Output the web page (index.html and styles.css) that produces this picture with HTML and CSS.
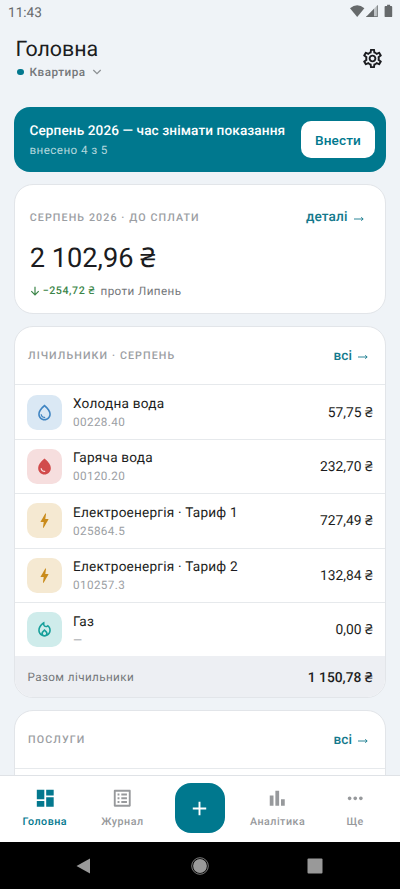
FILE: index.html
```html
<!DOCTYPE html>
<html lang="uk">
<head>
<meta charset="utf-8">
<title>Головна</title>
<link rel="stylesheet" href="styles.css">
</head>
<body>
<div class="screen">
  <div class="status">
    <span class="clock">11:43</span>
    <svg class="status-icons" viewBox="0 0 46 16">
      <path d="M0 4.2Q7.2-1.8 14.4 4.2L7.2 13z"/>
      <path d="M16 13L27.6 1v12z" opacity=".35"/><path d="M16 13L24 4.7V13z"/><path d="M27.7 1v12H16.5v-.7h10.4V2z"/>
      <path d="M35.500 2h1.600V.8h3V2h1.200q.9 0 .9.9v9.300q0 .9-.9.9h-5.800q-.9 0-.9-.9V2.900q0-.9.9-.9z"/>
    </svg>
  </div>
  <header class="header">
    <div>
      <h1>Головна</h1>
      <div class="place"><i class="dot"></i><span>Квартира</span><svg viewBox="0 0 10 6"><path d="M1.300 1l3.700 3.600L8.700 1"/></svg></div>
    </div>
    <svg class="gear" viewBox="0 0 24 24"><path d="M19.43 12.98c.04-.32.07-.64.07-.98 0-.34-.03-.66-.07-.98l2.110-1.650c.19-.15.24-.42.12-.64l-2-3.460c-.09-.16-.26-.25-.44-.25-.06 0-.12.01-.17.03l-2.490 1c-.52-.4-1.080-.73-1.690-.98l-.38-2.650C14.460 2.180 14.250 2 14 2h-4c-.25 0-.46.18-.49.42l-.38 2.650c-.61.25-1.170.59-1.690.98l-2.490-1c-.06-.02-.12-.03-.18-.03-.17 0-.34.09-.43.25l-2 3.460c-.13.22-.07.49.12.64l2.110 1.650c-.04.32-.07.65-.07.98 0 .33.03.66.07.98l-2.110 1.650c-.19.15-.24.42-.12.64l2 3.460c.09.16.26.25.44.25.06 0 .12-.01.17-.03l2.490-1c.52.4 1.080.73 1.690.98l.38 2.650c.03.24.24.42.49.42h4c.25 0 .46-.18.49-.42l.38-2.650c.61-.25 1.170-.59 1.690-.98l2.490 1c.06.02.12.03.18.03.17 0 .34-.09.43-.25l2-3.460c.12-.22.07-.49-.12-.64l-2.110-1.650zm-1.980-1.710c.04.31.05.52.05.73 0 .21-.02.43-.05.73l-.14 1.130.89.7 1.080.84-.7 1.210-1.270-.51-1.040-.42-.9.68c-.43.32-.84.56-1.250.73l-1.060.43-.16 1.130-.2 1.350h-1.400l-.19-1.350-.16-1.130-1.060-.43c-.43-.18-.83-.41-1.230-.71l-.91-.7-1.060.43-1.270.51-.7-1.210 1.080-.84.89-.7-.14-1.130c-.03-.31-.05-.54-.05-.74s.02-.43.05-.73l.14-1.130-.89-.7-1.080-.84.7-1.210 1.270.51 1.040.42.9-.68c.43-.32.84-.56 1.250-.73l1.060-.43.16-1.130.2-1.350h1.390l.19 1.350.16 1.130 1.060.43c.43.18.83.41 1.230.71l.91.7 1.060-.43 1.270-.51.7 1.210-1.070.85-.89.7.14 1.130zM12 8c-2.210 0-4 1.790-4 4s1.790 4 4 4 4-1.790 4-4-1.790-4-4-4zm0 6c-1.100 0-2-.9-2-2s.9-2 2-2 2 .9 2 2-.9 2-2 2z"/></svg>
  </header>

  <main class="content">
    <section class="banner">
      <div>
        <div class="banner-title">Серпень 2026 — час знімати показання</div>
        <div class="banner-sub">внесено 4 з 5</div>
      </div>
      <button class="enter">Внести</button>
    </section>

    <section class="card summary">
      <div class="card-head"><span class="label">СЕРПЕНЬ 2026 · ДО СПЛАТИ</span><a class="link">деталі <svg class="arrow" viewBox="0 0 10 6"><path d="M0 3h9M7.200 1.300L9.200 3 7.200 4.700"/></svg></a></div>
      <div class="amount">2 102,96 ₴</div>
      <div class="compare"><svg viewBox="0 0 10 10"><path d="M5 .8v8M1.300 5.100L5 8.800l3.700-3.700"/></svg><b>−254,72 ₴</b><span>проти Липень</span></div>
    </section>

    <section class="card meters">
      <div class="card-head"><span class="label">ЛІЧИЛЬНИКИ · СЕРПЕНЬ</span><a class="link">всі <svg class="arrow" viewBox="0 0 10 6"><path d="M0 3h9M7.200 1.300L9.200 3 7.200 4.700"/></svg></a></div>
      <div class="row">
        <div class="tile cold"><svg viewBox="0 0 24 24"><path d="M12 2c-5.330 4.550-8 8.480-8 11.800 0 4.980 3.800 8.200 8 8.200s8-3.220 8-8.200c0-3.320-2.670-7.250-8-11.800zm0 18c-3.350 0-6-2.570-6-6.200 0-2.340 1.950-5.440 6-9.140 4.050 3.700 6 6.790 6 9.140 0 3.630-2.650 6.200-6 6.200zm-4.170-6c.37 0 .67.26.74.62.41 2.220 2.280 2.980 3.640 2.870.43-.02.79.32.79.75 0 .4-.32.73-.72.75-2.130.13-4.620-1.090-5.190-4.120-.08-.45.28-.87.74-.87z"/></svg></div>
        <div class="info"><div class="name">Холодна вода</div><div class="reading">00228.40</div></div>
        <div class="price">57,75 ₴</div>
      </div>
      <div class="row">
        <div class="tile hot"><svg viewBox="0 0 24 24"><path d="M12 2c-5.330 4.550-8 8.480-8 11.800 0 4.980 3.800 8.200 8 8.200s8-3.220 8-8.200c0-3.320-2.670-7.250-8-11.800zM7.830 14c.37 0 .67.26.74.62.41 2.220 2.280 2.980 3.640 2.870.43-.02.79.32.79.75 0 .4-.32.73-.72.75-2.130.13-4.620-1.090-5.190-4.120-.08-.45.28-.87.74-.87z"/></svg></div>
        <div class="info"><div class="name">Гаряча вода</div><div class="reading">00120.20</div></div>
        <div class="price">232,70 ₴</div>
      </div>
      <div class="row">
        <div class="tile power"><svg viewBox="0 0 24 24"><path d="M11 21h-1l1-7H7.500c-.88 0-.33-.75-.31-.78C8.480 10.940 10.420 7.540 13.010 3h1l-1 7h3.510c.4 0 .62.19.4.66C12.970 17.550 11 21 11 21z"/></svg></div>
        <div class="info"><div class="name">Електроенергія · Тариф 1</div><div class="reading">025864.5</div></div>
        <div class="price">727,49 ₴</div>
      </div>
      <div class="row">
        <div class="tile power"><svg viewBox="0 0 24 24"><path d="M11 21h-1l1-7H7.500c-.88 0-.33-.75-.31-.78C8.480 10.940 10.420 7.540 13.010 3h1l-1 7h3.510c.4 0 .62.19.4.66C12.970 17.550 11 21 11 21z"/></svg></div>
        <div class="info"><div class="name">Електроенергія · Тариф 2</div><div class="reading">010257.3</div></div>
        <div class="price">132,84 ₴</div>
      </div>
      <div class="row">
        <div class="tile gas"><svg viewBox="0 0 24 24"><path d="M16 6l-.44.55c-.42.52-.98.75-1.540.75C13 7.300 12 6.520 12 5.300V2S4 6 4 13c0 4.420 3.580 8 8 8s8-3.580 8-8c0-2.960-1.610-5.620-4-7zm-4 13c-1.100 0-2-.87-2-1.940 0-.51.2-.99.58-1.360L12 14.300l1.430 1.400c.37.37.57.85.57 1.360 0 1.070-.9 1.940-2 1.940zm3.960-1.500c.04-.36.22-1.890-1.130-3.220L12 11.500l-2.830 2.780C7.810 15.620 8 17.160 8.040 17.500 6.790 16.400 6 14.790 6 13c0-3.160 2.130-5.650 4.030-7.250.23 1.990 1.930 3.550 3.990 3.550.78 0 1.540-.23 2.180-.66C17.340 9.780 18 11.350 18 13c0 1.790-.79 3.400-2.040 4.500z"/></svg></div>
        <div class="info"><div class="name">Газ</div><div class="reading">—</div></div>
        <div class="price">0,00 ₴</div>
      </div>
      <div class="total"><span>Разом лічильники</span><b>1 150,78 ₴</b></div>
    </section>

    <section class="card services">
      <div class="card-head"><span class="label">ПОСЛУГИ</span><a class="link">всі <svg class="arrow" viewBox="0 0 10 6"><path d="M0 3h9M7.200 1.300L9.200 3 7.200 4.700"/></svg></a></div>
      <div class="row"></div>
    </section>
  </main>

  <nav class="tabs">
    <a class="tab active"><svg viewBox="0 0 24 24"><path d="M3 13h8V3H3v10zm0 8h8v-6H3v6zm10 0h8V11h-8v10zm0-18v6h8V3h-8z"/></svg><span>Головна</span></a>
    <a class="tab"><svg viewBox="0 0 24 24"><path d="M19 5v14H5V5h14m1.100-2H3.900c-.5 0-.9.4-.9.9v16.200c0 .4.4.9.9.9h16.200c.4 0 .9-.5.9-.9V3.900c0-.5-.5-.9-.9-.9zM11 7h6v2h-6V7zm0 4h6v2h-6v-2zm0 4h6v2h-6zM7 7h2v2H7zm0 4h2v2H7zm0 4h2v2H7z"/></svg><span>Журнал</span></a>
    <div class="tab-center"><button class="add"><svg viewBox="0 0 24 24"><path d="M19 13h-6v6h-2v-6H5v-2h6V5h2v6h6v2z"/></svg></button></div>
    <a class="tab"><svg viewBox="0 0 24 24"><path d="M4 9h4v11H4zm12 4h4v7h-4zm-6-9h4v16h-4z"/></svg><span>Аналітика</span></a>
    <a class="tab"><svg viewBox="0 0 24 24"><path d="M6 10c-1.100 0-2 .9-2 2s.9 2 2 2 2-.9 2-2-.9-2-2-2zm12 0c-1.100 0-2 .9-2 2s.9 2 2 2 2-.9 2-2-.9-2-2-2zm-6 0c-1.100 0-2 .9-2 2s.9 2 2 2 2-.9 2-2-.9-2-2-2z"/></svg><span>Ще</span></a>
  </nav>
  <div class="system">
    <svg viewBox="0 0 18 18"><path d="M1.500 9L15 1.500v15z"/></svg>
    <svg viewBox="0 0 18 18"><circle cx="9" cy="9" r="6.900"/><circle class="ring" cx="9" cy="9" r="8.300"/></svg>
    <svg viewBox="0 0 18 18"><rect x="1.500" y="1.500" width="15" height="15" rx="1"/></svg>
  </div>
</div>
</body>
</html>
```
FILE: styles.css
```css
* { box-sizing: border-box; }
body { margin: 0; font-family: Roboto, "Noto Sans", sans-serif; color: #1b1c20; background: #eff3f7; text-rendering: geometricPrecision; }
svg { display: block; flex: none; fill: currentColor; }
button { font: inherit; border: 0; padding: 0; }
.screen { width: 400px; height: 889px; display: flex; flex-direction: column; overflow: hidden; }

.status { flex: none; height: 24px; padding: 1px 7px 0 8px; display: flex; justify-content: space-between; align-items: center; color: #66696b; }
.clock { font-size: 13.6px; }
.status-icons { width: 46px; height: 16px; margin-right: -3px; margin-top: -1px; }

.header { flex: none; height: 83px; padding: 12px 17px 0 15.500px; display: flex; justify-content: space-between; }
h1 { margin: 0; font-size: 21.4px; line-height: 28px; font-weight: 400; }
.place { display: flex; align-items: center; padding-left: 1.500px; font-size: 11.7px; line-height: 16px; font-weight: 500; letter-spacing: .5px; color: #74777a; }
.dot { width: 6.500px; height: 6.500px; border-radius: 50%; background: #03788e; margin-right: 6px; }
.place svg { width: 10px; height: 6px; margin-left: 6px; fill: none; stroke: #8c9093; stroke-width: 1.3; }
.gear { width: 23px; height: 23px; margin-top: 11px; margin-right: -1px; }

.content { flex: 1; min-height: 0; overflow: hidden; padding: 0 14px; display: flex; flex-direction: column; gap: 12px; }
.banner { flex: none; height: 65px; border-radius: 16px; background: #00788e; color: #fff; display: flex; justify-content: space-between; align-items: center; padding: 0 11px 0 15.500px; }
.banner-title { font-size: 13.600px; line-height: 20px; font-weight: 500; letter-spacing: .1px; white-space: nowrap; }
.banner-sub { font-size: 11.700px; line-height: 16px; margin-top: 1px; letter-spacing: .4px; color: #b3d7dd; }
.enter { width: 74px; height: 37px; border-radius: 10px; background: #fff; color: #00788e; font-size: 13.600px; font-weight: 500; letter-spacing: .1px; }

.card { flex: none; background: #fff; border: 1px solid #e2e5e9; border-radius: 19px; overflow: hidden; }
.card-head { display: flex; justify-content: space-between; align-items: center; }
.label { font-size: 10.700px; font-weight: 500; letter-spacing: 1.100px; color: #9b9ea3; }
.link { display: flex; align-items: center; gap: 6px; color: #14798c; font-size: 13.600px; font-weight: 500; letter-spacing: .1px; }
.arrow { width: 10px; height: 6px; margin-top: 3px; fill: none; stroke: currentColor; stroke-width: .9; }

.summary { height: 130px; padding: 22px 21.500px 0 14.700px; }
.summary .card-head { height: 20px; }
.amount { margin-top: 13px; font-size: 27.200px; line-height: 36px; }
.compare { display: flex; align-items: center; margin-top: 6.500px; height: 16px; font-size: 10.700px; letter-spacing: .55px; color: #74777a; }
.compare svg { width: 10px; height: 10px; margin-right: 3px; fill: none; stroke: #3b8548; stroke-width: 1.2; }
.compare b { font-weight: 500; color: #3b8548; margin-right: 5.500px; }
.compare span { font-size: 11.700px; letter-spacing: .4px; }

.meters { height: 372px; }
.meters .card-head, .services .card-head { height: 57.300px; padding: 0 17px 0 13px; }
.row { height: 54.450px; border-top: 1px solid #e6e9ec; display: flex; align-items: center; padding: 0 12.500px 0 12px; }
.tile { width: 35px; height: 35px; border-radius: 10px; display: flex; align-items: center; justify-content: center; }
.tile svg { width: 19px; height: 19px; }
.cold { background: #dae8f4; color: #4085c2; }
.hot { background: #f6dede; color: #d14b4b; }
.power { background: #f5e9d2; color: #c98b1b; }
.gas { background: #cfeceb; color: #17a09b; }
.info { flex: 1; margin-left: 11px; padding-top: 1px; }
.name { font-size: 13.600px; line-height: 19px; letter-spacing: .22px; }
.reading { font-size: 11.700px; line-height: 16px; letter-spacing: .4px; color: #9b9ea3; }
.price { font-size: 13.800px; }
.total { height: 41.800px; background: #edeff3; display: flex; align-items: center; justify-content: space-between; padding: 0 12.500px; font-size: 11.700px; letter-spacing: .4px; color: #74777a; }
.total b { font-size: 13.800px; font-weight: 500; letter-spacing: 0; color: #1b1c20; }
.services { height: 180px; }

.tabs { flex: none; height: 67px; background: #fff; border-top: 1px solid #dfe2e6; display: flex; padding: 0 6px; }
.tab { flex: 1; display: flex; flex-direction: column; align-items: center; padding-top: 11px; color: #97999c; font-size: 10.700px; font-weight: 500; letter-spacing: .5px; }
.tab svg { width: 22.500px; height: 22.500px; }
.tab span { line-height: 14px; margin-top: 5px; }
.tab.active { color: #03788e; }
.tab-center { flex: 1; display: flex; justify-content: center; padding-top: 7px; }
.add { width: 50px; height: 50px; border-radius: 16px; background: #00788e; color: #fff; display: flex; align-items: center; justify-content: center; }
.add svg { width: 23px; height: 23px; }

.system { flex: none; height: 47px; background: #000; color: #999; display: flex; justify-content: space-between; align-items: center; padding: 0 76px 0 75px; }
.system svg { width: 18px; height: 18px; }
.ring { fill: none; stroke: #999; stroke-width: .8; }
```
